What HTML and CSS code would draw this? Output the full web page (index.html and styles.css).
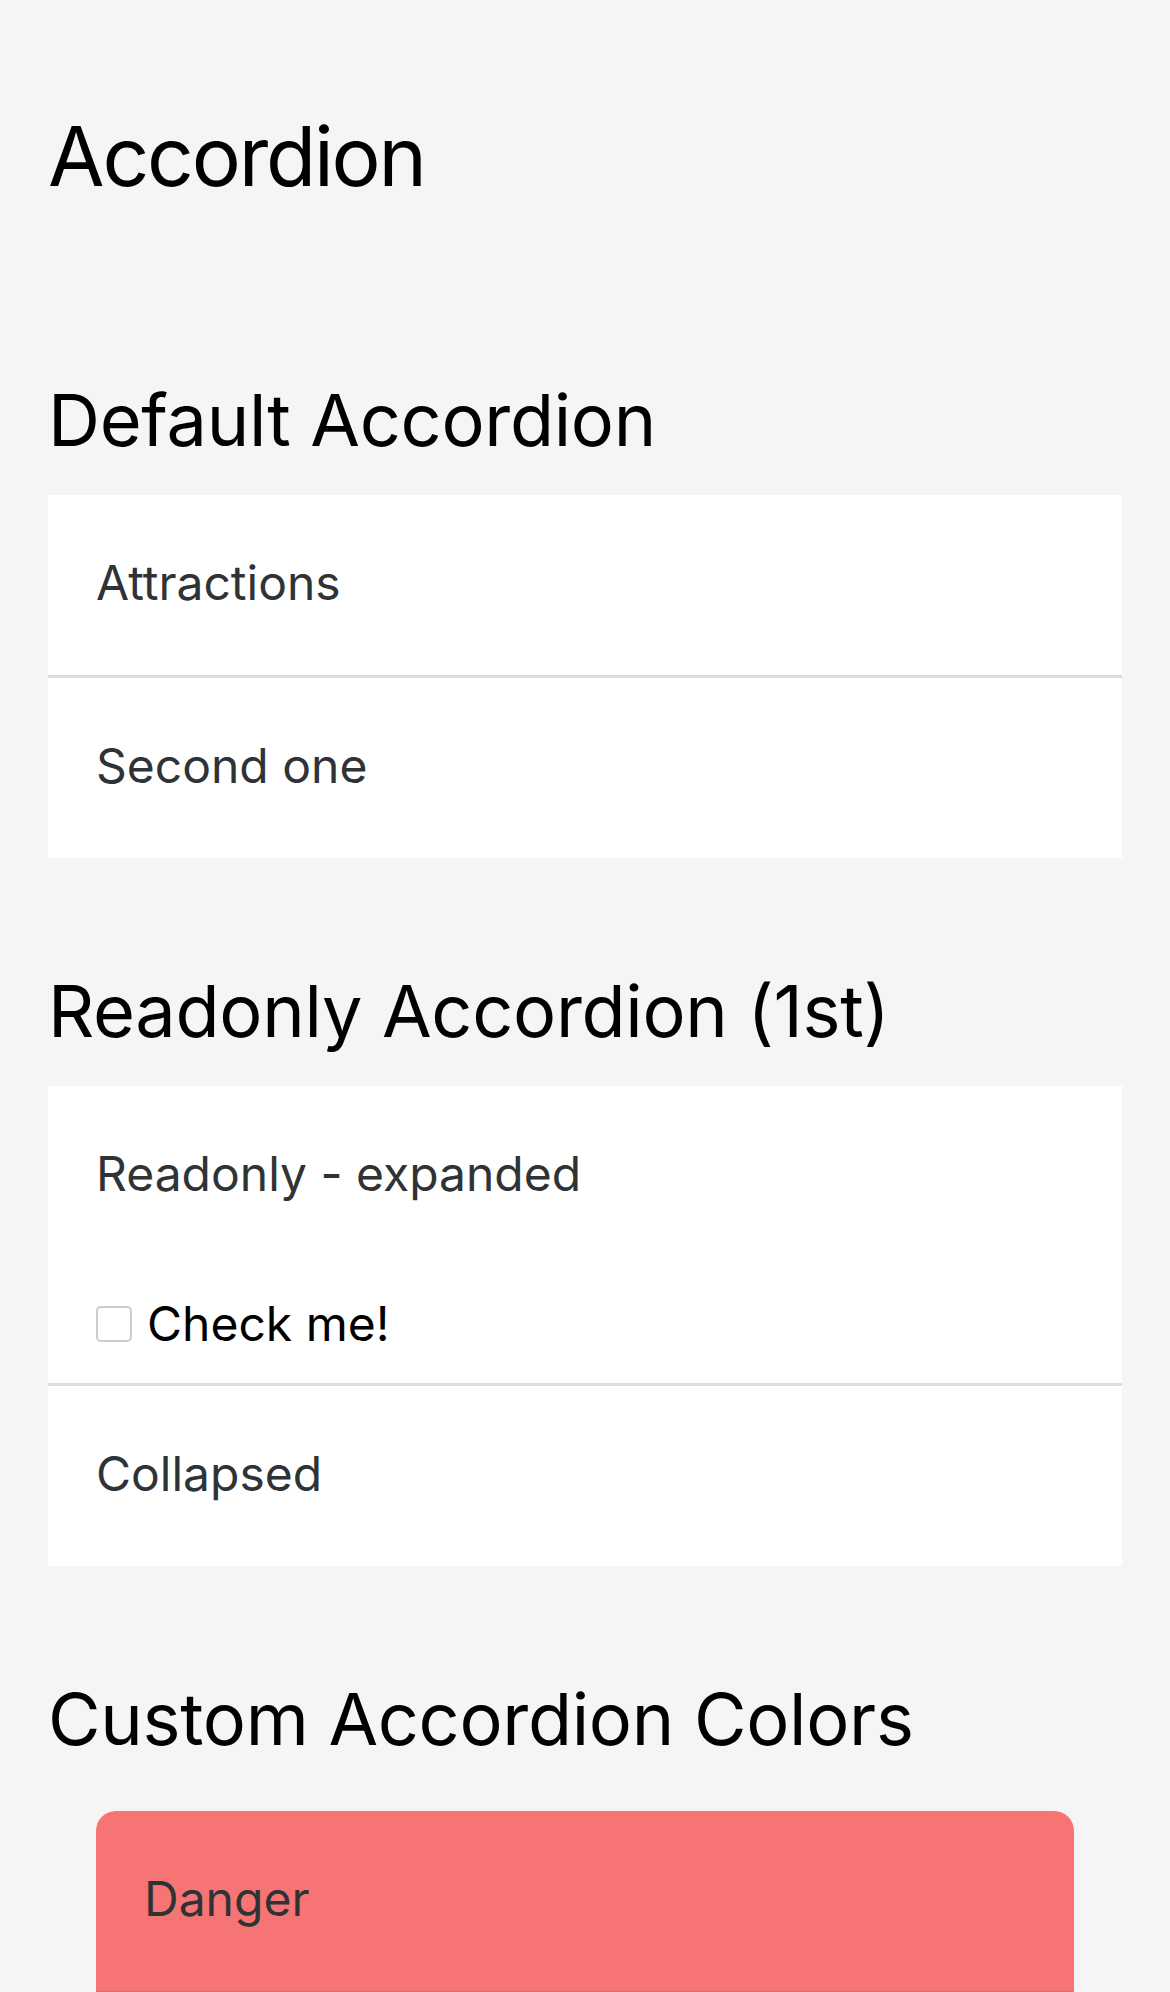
FILE: index.html
```html
<!DOCTYPE html>
<html lang="en">
<head>
<meta charset="utf-8">
<title>Accordion</title>
<link rel="stylesheet" href="styles.css">
</head>
<body>
<main class="page">
  <h1 class="page-title">Accordion</h1>

  <section class="demo demo-first">
    <h2 class="demo-title">Default Accordion</h2>
    <div class="accordion">
      <div class="acc-item">
        <div class="acc-header">Attractions</div>
      </div>
      <div class="acc-item">
        <div class="acc-header">Second one</div>
      </div>
    </div>
  </section>

  <section class="demo">
    <h2 class="demo-title">Readonly Accordion (1st)</h2>
    <div class="accordion">
      <div class="acc-item">
        <div class="acc-header">Readonly - expanded</div>
        <div class="acc-content">
          <label class="check"><span class="check-box"></span><span class="check-label">Check me!</span></label>
        </div>
      </div>
      <div class="acc-item">
        <div class="acc-header">Collapsed</div>
      </div>
    </div>
  </section>

  <section class="demo">
    <h2 class="demo-title">Custom Accordion Colors</h2>
    <div class="custom-wrap">
      <div class="accordion accordion-danger">
        <div class="acc-item">
          <div class="acc-header">Danger</div>
        </div>
        <div class="acc-item">
          <div class="acc-header">Second</div>
        </div>
      </div>
    </div>
  </section>
</main>
</body>
</html>
```
FILE: styles.css
```css
html, body {
  margin: 0;
  padding: 0;
  background: #f5f5f5;
}

body {
  font-family: Inter, "Noto Sans", "Liberation Sans", sans-serif;
  color: #000;
}

.page {
  padding: 104px 48px 0;
}

.page-title {
  margin: 0;
  font-size: 82px;
  line-height: 105px;
  letter-spacing: -2.2px;
  font-weight: 400;
  color: #000;
}

.demo {
  margin-top: 109px;
}

.demo-first {
  margin-top: 167px;
}

.demo-title {
  margin: 0 0 31px;
  font-size: 72px;
  line-height: 88px;
  letter-spacing: -0.3px;
  font-weight: 400;
  color: #000;
}

.accordion {
  background: #fff;
}

.acc-item + .acc-item {
  border-top: 3px solid #dddddd;
}

.acc-header {
  height: 180px;
  padding: 0 48px 6px;
  display: flex;
  align-items: center;
  font-size: 48px;
  color: #2f3336;
  box-sizing: border-box;
}

.acc-content {
  padding: 29px 48px 30px;
}

.check {
  display: flex;
  align-items: center;
  gap: 15px;
  font-size: 48px;
  line-height: 58px;
  color: #000;
}

.check-box {
  width: 36px;
  height: 36px;
  box-sizing: border-box;
  border: 2px solid #cfcbc6;
  border-radius: 5px;
  background: #fff;
  flex: none;
}

.custom-wrap {
  padding: 17px 48px 0;
}

.accordion-danger {
  background: #f67574;
  border-radius: 20px;
  overflow: hidden;
}

.accordion-danger .acc-item + .acc-item {
  border-top-color: rgba(0, 0, 0, 0.1);
}
```
